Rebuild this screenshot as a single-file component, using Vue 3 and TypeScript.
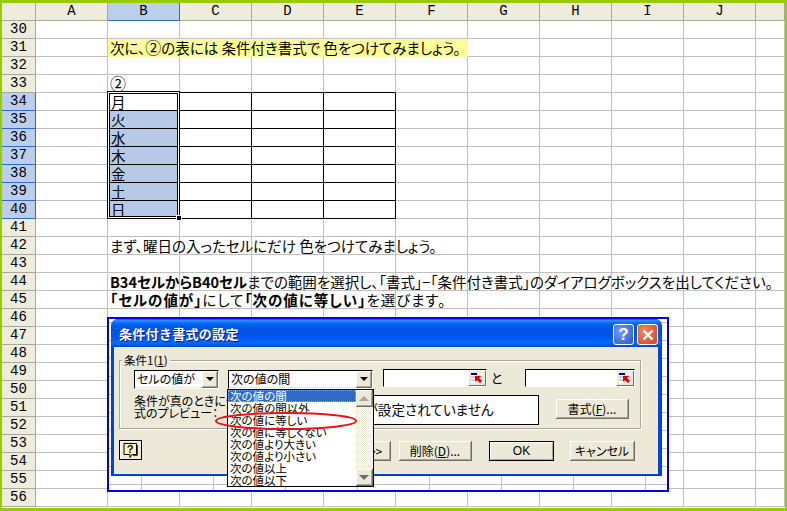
<script setup lang="ts">
interface Run { t: string; b?: boolean; big?: boolean }
const columns = ['A', 'B', 'C', 'D', 'E', 'F', 'G', 'H', 'I', 'J', '']
const days = ['月', '火', '水', '木', '金', '土', '日']
const rowNumbers = Array.from({ length: 27 }, (_, i) => 30 + i)

const texts: Record<number, Run[]> = {
  31: [{ t: '次に、' }, { t: '②', big: true }, { t: 'の表には 条件付き書式で 色をつけてみましょう。' }],
  33: [{ t: '②', big: true }],
  42: [{ t: 'まず、曜日の入ったセルにだけ 色をつけてみましょう。' }],
  44: [
    { t: 'B34セルからB40セル', b: true },
    { t: 'までの範囲を選択し、「書式」−「条件付き書式」のダイアログボックスを出してください。' }
  ],
  45: [
    { t: '「セルの値が」', b: true },
    { t: 'にして' },
    { t: '「次の値に等しい」', b: true },
    { t: 'を選びます。' }
  ]
}
days.forEach((d, i) => { texts[34 + i] = [{ t: d }] })

const options = ['次の値の間', '次の値の間以外', '次の値に等しい', '次の値に等しくない', '次の値より大きい', '次の値より小さい', '次の値以上', '次の値以下']

function cellClass(row: number, col: number) {
  const inTable = row >= 34 && row <= 40
  return {
    yellow: row === 31 && col >= 1 && col <= 5,
    tb: inTable && col >= 1 && col <= 4,
    tbtop: row === 33 && col >= 1 && col <= 4,
    tleft: inTable && col === 0,
    picked: row >= 35 && row <= 40 && col === 1,
    day: inTable && col === 1
  }
}
</script>

<template>
  <div class="page">
    <div class="sheet">
      <div class="corner"></div>
      <div v-for="c in columns" :key="c" class="colhead" :class="{ on: c === 'B' }">{{ c }}</div>
      <template v-for="r in rowNumbers" :key="r">
        <div class="rowhead" :class="{ on: r >= 34 && r <= 40 }">{{ r }}</div>
        <div v-for="(c, i) in columns" :key="i" class="cell" :class="cellClass(r, i)">
          <span v-if="i === 1 && texts[r]" class="txt" :class="{ wider: r === 45 }"><span v-for="(run, k) in texts[r]" :key="k" :class="{ bold: run.b, big: run.big }">{{ run.t }}</span></span>
        </div>
      </template>
    </div>

    <div class="selection"><i class="handle"></i></div>

    <div class="frame">
      <div class="dialog">
        <div class="titlebar">
          <span class="title">条件付き書式の設定</span>
          <span class="tbtn help">?</span>
          <span class="tbtn close">
            <svg width="12" height="12" viewBox="0 0 12 12"><path d="M1.5 1.5l9 9M10.5 1.5l-9 9" stroke="#fff" stroke-width="2.2" fill="none" /></svg>
          </span>
        </div>
        <div class="client">
          <div class="group">
            <span class="legend">条件1(<u>1</u>)</span>
            <div class="row1">
              <div class="combo c1"><span class="val">セルの値が</span><span class="arrow"><i></i></span></div>
              <div class="combo c2">
                <span class="val">次の値の間</span><span class="arrow"><i></i></span>
                <div class="drop">
                  <div class="items">
                    <div v-for="(o, i) in options" :key="o" class="item" :class="{ active: i === 0 }">{{ o }}</div>
                  </div>
                  <div class="scroll">
                    <span class="sbtn"><i class="up"></i></span>
                    <span class="sbtn"><i class="down"></i></span>
                  </div>
                  <svg class="ring" width="146" height="20" viewBox="0 0 146 20"><ellipse cx="72" cy="10" rx="70" ry="8" fill="none" stroke="#e8141c" stroke-width="2" /></svg>
                </div>
              </div>
              <div class="ref r1">
                <svg class="refbtn" width="16" height="14" viewBox="0 0 16 14"><rect width="16" height="14" fill="#ece9d8" /><rect x="2" y="2" width="12" height="10" fill="#fff" /><rect x="2" y="2" width="6" height="2" fill="#000080" /><path d="M2 6h12M2 9h12M8 4v8M11 4v8" stroke="#a0a0a0" /><path d="M6 5l6 0-2 2 3 3-2 2-3-3-2 2z" fill="#e00000" /></svg>
              </div>
              <span class="to">と</span>
              <div class="ref r2">
                <svg class="refbtn" width="16" height="14" viewBox="0 0 16 14"><rect width="16" height="14" fill="#ece9d8" /><rect x="2" y="2" width="12" height="10" fill="#fff" /><rect x="2" y="2" width="6" height="2" fill="#000080" /><path d="M2 6h12M2 9h12M8 4v8M11 4v8" stroke="#a0a0a0" /><path d="M6 5l6 0-2 2 3 3-2 2-3-3-2 2z" fill="#e00000" /></svg>
              </div>
            </div>
            <div class="row2">
              <div class="label">条件が真のときに使用する書<br />式のプレビュー：</div>
              <div class="preview">書式が設定されていません</div>
              <button class="btn fmt">書式(<u>F</u>)...</button>
            </div>
          </div>
          <div class="footer">
            <span class="helpbtn">
              <svg width="18" height="17" viewBox="0 0 18 17"><path d="M2 1.5h12.5v11H10l-2 3v-3H2z" fill="#fff7a8" stroke="#000" /><path d="M15.5 3v10.5H11" stroke="#404040" fill="none" /><text x="8" y="11" font-family="Liberation Sans" font-size="11" font-weight="700" fill="#000080" text-anchor="middle">?</text></svg>
            </span>
            <button class="btn add">追加(<u>A</u>) &gt;&gt;</button>
            <button class="btn del">削除(<u>D</u>)...</button>
            <button class="btn ok">OK</button>
            <button class="btn cancel">キャンセル</button>
          </div>
        </div>
      </div>
    </div>
  </div>
</template>

<style>
html, body { margin: 0; background: #fff; overflow: hidden; }
</style>

<style scoped>
.page {
  position: relative;
  box-sizing: border-box;
  width: 787px;
  height: 511px;
  border: solid #99cc00;
  border-width: 3px 2px 3px 2px;
  overflow: hidden;
  background: #fff;
  font-family: "Noto Sans CJK JP", sans-serif;
  font-feature-settings: "palt";
  color: #000;
}
.sheet {
  display: grid;
  grid-template-columns: 34px repeat(10, 72px) 29px;
  grid-auto-rows: 18px;
}
.corner, .colhead, .rowhead {
  box-sizing: border-box;
  background: #eeecdd;
  border-right: 1px solid #aca899;
  border-bottom: 1px solid #aca899;
  font: 14px/17px "Liberation Mono", monospace;
  text-align: center;
}
.colhead.on, .rowhead.on { background: #bbcfec; }
.colhead.on { border-bottom: 1px solid #316ac5; border-right-color: #316ac5; }
.rowhead.on { border-bottom: 1px solid #316ac5; border-right-color: #316ac5; }
.cell {
  box-sizing: border-box;
  border-right: 1px solid #c0c0c0;
  border-bottom: 1px solid #c0c0c0;
  padding-left: 2px;
  font-size: 14.5px;
  line-height: 17px;
  white-space: nowrap;
}
.cell.yellow { background: #ffff99; border-color: #ffff99; }
.cell.tb { border-right-color: #000; border-bottom-color: #000; }
.cell.tbtop { border-bottom-color: #000; }
.cell.tleft { border-right-color: #000; }
.cell.picked { background: #b6cae8; }
.cell.day { padding-left: 3px; }
.txt { position: relative; z-index: 1; }
.txt.wider { letter-spacing: 0.95px; }
.bold { font-weight: 700; }
.big { font-size: 16px; line-height: 17px; }

.selection {
  position: absolute;
  left: 105px;
  top: 88px;
  width: 71px;
  height: 126px;
  border: 1px solid #000;
  box-shadow: inset 0 0 0 1px #fff, inset 0 0 0 2px #000;
  z-index: 2;
}
.handle {
  position: absolute;
  right: -2px;
  bottom: -2px;
  width: 4px;
  height: 4px;
  background: #000;
  outline: 1px solid #fff;
}

.frame {
  position: absolute;
  left: 105px;
  top: 314px;
  box-sizing: border-box;
  width: 562px;
  height: 175px;
  border: 2px solid #0000f0;
  background-color: #fff;
  background-image:
    linear-gradient(to right, #c0c0c0 1px, transparent 1px),
    linear-gradient(to bottom, #c0c0c0 1px, transparent 1px);
  background-size: 72px 100%, 100% 18px;
  background-position: 32px 0, 0 3px;
  padding-left: 2px;
  z-index: 3;
}
.dialog {
  box-sizing: border-box;
  width: 551px;
  height: 157px;
  border-radius: 7px 7px 0 0;
  background: #0044d8;
  border: solid #0a3bc8;
  border-width: 0 1px 1px 0;
  font-size: 12px;
}
.titlebar {
  display: flex;
  align-items: center;
  height: 28px;
  padding: 0 3px 0 8px;
  border-radius: 7px 7px 0 0;
  background: linear-gradient(to bottom, #0058ee 0%, #3593ff 6%, #127dff 10%, #036ffc 14%, #0262ee 20%, #0057e5 28%, #0054e3 40%, #0055eb 60%, #005bf5 72%, #026afe 82%, #0062ef 90%, #0052d6 96%, #0040ab 100%);
}
.title {
  flex: 1;
  color: #fff;
  font-size: 13px;
  font-weight: 700;
  font-feature-settings: normal;
  letter-spacing: 0.3px;
  text-shadow: 1px 1px 0 #0f1089;
}
.tbtn {
  box-sizing: border-box;
  display: flex;
  align-items: center;
  justify-content: center;
  width: 21px;
  height: 21px;
  border: 1px solid #fff;
  border-radius: 3px;
  color: #fff;
  margin-top: 3px;
}
.help {
  background: radial-gradient(circle at 35% 35%, #6f9bf2, #2a57cf);
  font: 700 17px/1 "Liberation Sans", sans-serif;
  margin-right: 3px;
}
.close { background: radial-gradient(circle at 35% 35%, #ef8a66, #d2431f); }
.client {
  box-sizing: border-box;
  height: 127px;
  margin: 0 3px 0 3px;
  padding: 13px 0 0 5px;
  background: #ece9d8;
}
.group {
  position: relative;
  box-sizing: border-box;
  width: 522px;
  height: 69px;
  border: 1px solid #aca899;
  box-shadow: 1px 1px 0 #fff, inset 1px 1px 0 #fff;
  padding: 9px 0 0 14px;
}
.legend {
  position: absolute;
  left: 2px;
  top: -8px;
  padding: 0 2px;
  background: #ece9d8;
  line-height: 14px;
  font-size: 11.5px;
}
.row1 { display: flex; align-items: flex-start; height: 18px; }
.combo {
  position: relative;
  box-sizing: border-box;
  display: flex;
  height: 19px;
  background: #fff;
  border: 1px solid;
  border-color: #000 #fff #fff #000;
  box-shadow: inset -1px -1px 0 #ece9d8;
}
.c1 { width: 85px; }
.c2 { width: 145px; margin-left: 9px; }
.val { flex: 1; padding-left: 2px; line-height: 16px; font-size: 12px; white-space: nowrap; }
.arrow {
  box-sizing: border-box;
  display: flex;
  align-items: center;
  justify-content: center;
  width: 16px;
  background: #ece9d8;
  border-right: 1px solid #716f64;
  border-bottom: 1px solid #716f64;
  box-shadow: inset 1px 1px 0 #fff, inset -1px -1px 0 #aca899;
}
.arrow i {
  width: 0;
  height: 0;
  border: 4px solid transparent;
  border-top: 4px solid #000;
  border-bottom: 0;
}
.drop {
  position: absolute;
  left: -2px;
  top: 18px;
  box-sizing: border-box;
  display: flex;
  width: 147px;
  height: 98px;
  background: #fff;
  border: 1px solid #000;
  z-index: 5;
}
.items { flex: 1; min-width: 0; }
.item {
  height: 12px;
  line-height: 12px;
  font-size: 11.5px;
  padding-left: 2px;
  white-space: nowrap;
}
.item.active { background: #316ac5; color: #fff; outline: 1px dotted #e0b040; outline-offset: -1px; }
.scroll {
  display: flex;
  flex-direction: column;
  justify-content: space-between;
  width: 17px;
  background-color: #ece9d8;
  background-image: conic-gradient(#fff 25%, #ece9d8 0 50%, #fff 0 75%, #ece9d8 0);
  background-size: 2px 2px;
}
.sbtn {
  box-sizing: border-box;
  display: flex;
  align-items: center;
  justify-content: center;
  height: 17px;
  background: #ece9d8;
  border-right: 1px solid #716f64;
  border-bottom: 1px solid #716f64;
  box-shadow: inset 1px 1px 0 #fff, inset -1px -1px 0 #aca899;
}
.sbtn i { width: 0; height: 0; border: 5px solid transparent; }
.sbtn .up { border-top: 0; border-bottom: 5px solid #aca899; }
.sbtn .down { border-bottom: 0; border-top: 5px solid #716f64; }
.ring { position: absolute; left: -14px; top: 21px; overflow: visible; pointer-events: none; }
.ref {
  box-sizing: border-box;
  display: flex;
  justify-content: flex-end;
  align-items: center;
  height: 18px;
  background: #fff;
  border: 1px solid;
  border-color: #000 #fff #fff #000;
  margin-top: -1px;
}
.r1 { width: 104px; margin-left: 10px; }
.r2 { width: 110px; margin-left: 21px; }
.refbtn { border-right: 1px solid #716f64; border-bottom: 1px solid #716f64; }
.to { width: 0; flex: none; margin-left: 4px; margin-right: 13px; white-space: nowrap; line-height: 16px; font-size: 13px; }
.row2 { display: flex; margin-top: 7px; align-items: flex-start; }
.label { width: 158px; line-height: 12px; font-size: 12px; white-space: nowrap; }
.preview {
  box-sizing: border-box;
  width: 247px;
  height: 30px;
  background: #fff;
  border: 1px solid #000;
  text-align: center;
  line-height: 27px;
  font-size: 13.6px;
}
.btn {
  box-sizing: border-box;
  height: 20px;
  padding: 0;
  background: #ece9d8;
  border: 0;
  border-right: 1px solid #716f64;
  border-bottom: 1px solid #716f64;
  box-shadow: inset 1px 1px 0 #fff, inset -1px -1px 0 #aca899;
  font-family: "Noto Sans CJK JP", sans-serif;
  font-feature-settings: "palt";
  font-size: 12px;
  line-height: 18px;
  color: #000;
  white-space: nowrap;
}
.fmt { width: 73px; margin: 4px 0 0 17px; }
.footer { display: flex; align-items: flex-start; padding: 12px 0 0 0; }
.helpbtn {
  box-sizing: border-box;
  display: flex;
  align-items: center;
  justify-content: center;
  width: 23px;
  height: 20px;
  margin-top: -1px;
  background: #ece9d8;
  border: 1px solid #000;
  box-shadow: inset 1px 1px 0 #fff;
}
.add { width: 72px; margin-left: 177px; }
.del { width: 73px; margin-left: 8px; }
.ok { width: 65px; margin-left: 17px; border: 1px solid #000; font-family: "Liberation Sans", sans-serif; font-size: 12px; }
.cancel { width: 65px; margin-left: 16px; font-size: 12px; }
</style>
